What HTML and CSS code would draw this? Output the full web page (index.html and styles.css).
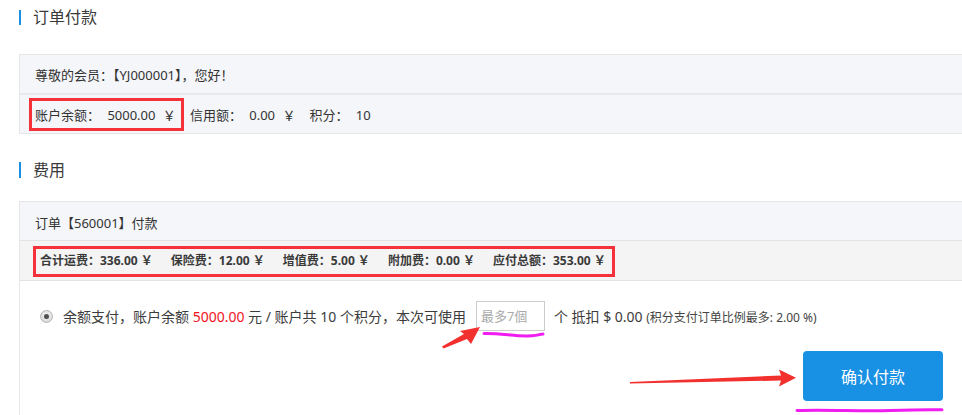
FILE: index.html
```html
<!DOCTYPE html>
<html lang="zh-CN">
<head>
<meta charset="utf-8">
<title>订单付款</title>
<link rel="stylesheet" href="styles.css">
</head>
<body>
<div class="page">
  <h2 class="sec-title first">订单付款</h2>
  <div class="panel">
    <div class="row row-greet">尊敬的会员：【YJ000001】，您好！</div>
    <div class="row row-account">
      <span class="item">账户余额： 5000.00 ￥</span>
      <span class="item">信用额： 0.00 ￥</span>
      <span class="item">积分： 10</span>
    </div>
  </div>

  <h2 class="sec-title second">费用</h2>
  <div class="panel">
    <div class="row row-order">订单【560001】付款</div>
    <div class="row row-fees">
      <span class="fee">合计运费：336.00 ￥</span>
      <span class="fee">保险费：12.00 ￥</span>
      <span class="fee">增值费：5.00 ￥</span>
      <span class="fee">附加费：0.00 ￥</span>
      <span class="fee">应付总额：353.00 ￥</span>
    </div>
    <div class="row-pay">
      <div class="pay-line">
        <span class="radio"><span class="dot"></span></span>
        <span class="pay-text">余额支付，账户余额 <span class="red">5000.00</span> 元 / 账户共 10 个积分，本次可使用</span>
        <input class="points" type="text" placeholder="最多7個">
        <span class="pay-text after">个 抵扣 $ 0.00 <small class="note">(积分支付订单比例最多: 2.00 %)</small></span>
      </div>
      <div class="actions">
        <button class="btn-pay" type="button">确认付款</button>
      </div>
    </div>
  </div>
</div>

<div class="mark mark-account"></div>
<div class="mark mark-fees"></div>

<svg class="annot" width="962" height="415" viewBox="0 0 962 415">
  <polygon fill="#f2302e" points="630,382 781,375.5 779,369.5 796,377.8 779,386.5 781,380.5 630,383.6"/>
  <polygon fill="#f2302e" points="442,346.5 464,334 460,331 480,327 471,344 467,339 443.5,348.5"/>
  <path d="M484 333.5 C500 333, 515 336.5, 528 336 S540 334, 543 334" stroke="#f01cf0" stroke-width="3" fill="none" stroke-linecap="round"/>
  <path d="M797 410.5 C830 409.5, 860 411.5, 890 410.5 S930 409.5, 942 409.8" stroke="#f01cf0" stroke-width="3" fill="none" stroke-linecap="round"/>
</svg>
</body>
</html>
```

FILE: styles.css
```css
html, body {
  margin: 0;
  padding: 0;
  overflow: hidden;
  background: #ffffff;
}
body {
  font-family: "Noto Sans", "Noto Sans CJK SC", "Microsoft YaHei", sans-serif;
  color: #333333;
  width: 962px;
  height: 415px;
}
.page {
  padding-left: 19px;
}
.sec-title {
  margin: 0;
  font-size: 16px;
  font-weight: normal;
  line-height: 15px;
  height: 15px;
  border-left: 2px solid #1a8fe3;
  padding-left: 12px;
  color: #3a3a3a;
}
.sec-title.first {
  margin-top: 10px;
}
.sec-title.second {
  margin-top: 28px;
  height: 16px;
  line-height: 16px;
}
.panel {
  border: 1px solid #e6e6e6;
  background: #f5f6f9;
  margin-right: -1px;
}
.sec-title.first + .panel {
  margin-top: 29px;
}
.sec-title.second + .panel {
  margin-top: 23px;
}
.row {
  padding-left: 15px;
  font-size: 13px;
}
.row-greet {
  line-height: 35px;
  padding-top: 3px;
  box-sizing: border-box;
  border-bottom: 2px solid #e8e9ec;
  height: 40px;
}
.row-account {
  height: 38px;
  box-sizing: border-box;
  padding-top: 2px;
  line-height: 36px;
  display: flex;
  gap: 14px;
  word-spacing: 4px;
}
.row-order {
  box-sizing: border-box;
  padding-top: 3px;
  line-height: 36px;
  border-bottom: 1px solid #e3e3e3;
  height: 39px;
}
.row-fees {
  background: #f4f4f4;
  height: 40px;
  box-sizing: border-box;
  border-bottom: 1px solid #e3e3e3;
  line-height: 39px;
  padding-left: 20px;
  font-size: 12px;
  font-weight: bold;
  display: flex;
  gap: 18px;
  color: #3a3a3a;
}
.row-pay {
  background: #ffffff;
  padding: 20px 19px 20px 20px;
}
.pay-line {
  display: flex;
  align-items: center;
  height: 30px;
  font-size: 14px;
}
.radio {
  width: 11px;
  height: 11px;
  border-radius: 50%;
  border: 1px solid #b5b5b5;
  background: radial-gradient(circle at 50% 40%, #f4f4f4, #d2d2d2);
  display: flex;
  align-items: center;
  justify-content: center;
  margin-right: 10px;
}
.dot {
  width: 5px;
  height: 5px;
  border-radius: 50%;
  background: #505050;
}
.pay-text {
  color: #3c3c3c;
  white-space: nowrap;
}
.red {
  color: #f2141e;
}
.points {
  width: 69px;
  height: 30px;
  box-sizing: border-box;
  border: 1px solid #cccccc;
  margin-left: 10px;
  margin-right: 9px;
  padding: 0 0 0 4px;
  font-family: "Noto Sans", "Noto Sans CJK SC", "Microsoft YaHei", sans-serif;
  font-size: 13px;
  outline: none;
}
.points::placeholder {
  color: #aaaaaa;
}
.note {
  font-size: 12px;
  color: #444444;
}
.actions {
  display: flex;
  justify-content: flex-end;
  margin-top: 20px;
}
.btn-pay {
  width: 140px;
  height: 50px;
  border: none;
  border-radius: 4px;
  background: #1890e3;
  color: #ffffff;
  font-family: "Noto Sans", "Noto Sans CJK SC", "Microsoft YaHei", sans-serif;
  font-size: 16px;
  cursor: pointer;
}
.mark {
  position: absolute;
  border: 3px solid #f5323a;
  box-sizing: border-box;
}
.mark-account {
  left: 29px;
  top: 98px;
  width: 155px;
  height: 33px;
}
.mark-fees {
  left: 33px;
  top: 246px;
  width: 582px;
  height: 31px;
}
.annot {
  position: absolute;
  left: 0;
  top: 0;
  pointer-events: none;
}
```
